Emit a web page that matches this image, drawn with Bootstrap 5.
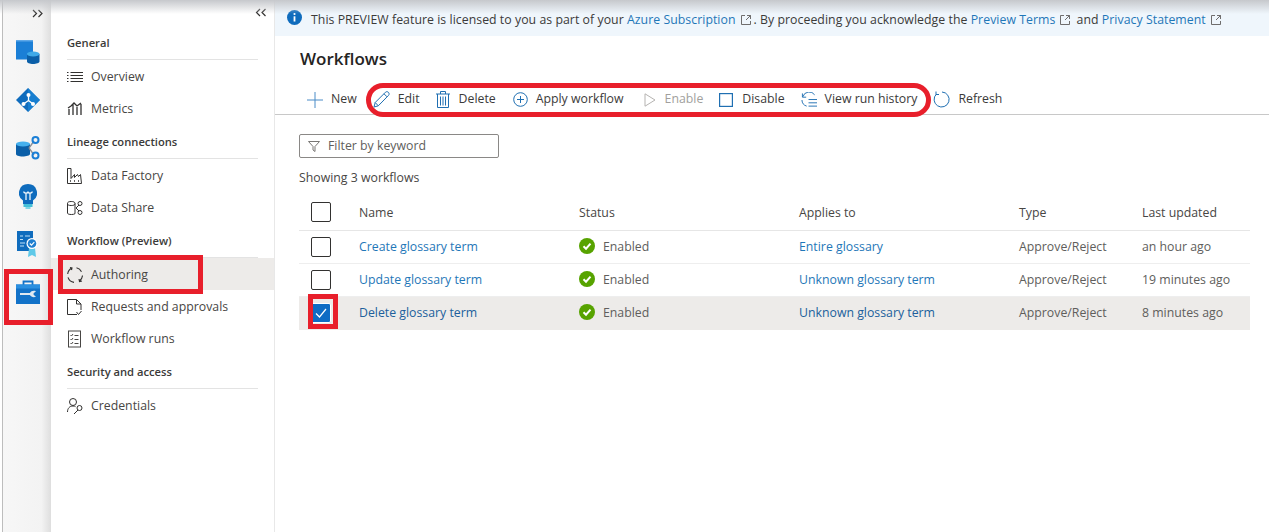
<!DOCTYPE html>
<html lang="en">
<head>
    <meta charset="UTF-8">
    <meta name="viewport" content="width=device-width, initial-scale=1.0">
    <title>Workflows</title>
    <link rel="stylesheet" href="https://cdn.jsdelivr.net/npm/bootstrap@5.3.0/dist/css/bootstrap.min.css">
    <style>
        html, body { height: 100%; }
        body {
            font-family: "Open Sans", "Noto Sans", sans-serif;
            font-size: 12.3px;
            color: #323130;
            background: #fff;
            overflow: hidden;
        }
        a { color: #1f77b8; text-decoration: none; }
        .app-shell { height: 532px; position: relative; }
        .top-shade {
            position: absolute; left: 0; right: 0; top: 0; height: 14px;
            background: linear-gradient(#c6c8cc, rgba(214,216,220,0));
            pointer-events: none; z-index: 3;
        }
        .icon-rail {
            width: 49px; flex: none; padding: 28px 0 0 3px;
            border-left: 1px solid #bdbdbd; margin-left: 2px;
            background: linear-gradient(90deg, #f7f7f7 0, #f3f3f3 80%, #dedede 100%);
            position: relative;
        }
        .rail-toggle { position: absolute; top: 9px; right: 7px; }
        .rail-slot { height: 48px; display: flex; justify-content: center; align-items: center; width: 43px; }
        .side-nav { width: 224px; flex: none; padding: 25px 0 0 0; position: relative; border-right: 1px solid #e8e8e8; }
        .nav-toggle { position: absolute; top: 8px; right: 7px; }
        .nav-head {
            height: 35px; margin: 0 16px 0 16px; padding-bottom: 7px; font-weight: 600; font-size: 11.2px;
            border-bottom: 1px solid #e3e3e3; display: flex; align-items: flex-end; color: #3b3a39;
        }
        .nav-row { height: 32px; display: flex; align-items: center; padding: 2px 0 0 16px; gap: 8px; color: #484644; position: relative; }
        .nav-row svg { width: 16px; height: 18px; flex: none; }
        .nav-row.is-active { background: #edebe9; }
        .mark-box { position: absolute; border: 5px solid #e81f2b; pointer-events: none; z-index: 2; }
        .mark-rail { left: 1px; top: 269px; width: 49px; height: 56px; }
        .mark-auth { left: 7px; right: 71px; top: -3px; bottom: -4px; }
        .mark-pill { left: -7px; right: -14px; top: 0; bottom: -3px; border-radius: 17px; }
        .mark-check { left: 9px; top: -3px; width: 30px; height: 35px; }
        .main-pane { min-width: 0; }
        .notice-bar { height: 36px; background: #eff6fc; padding: 5px 0 0 12px; gap: 9px; color: #3b3a39; flex: none; letter-spacing: .04px; }
        .notice-bar > svg { margin-bottom: 7px; flex: none; }
        .ext-icon { width: 10px; height: 10px; margin: 0 3px 0 5px; vertical-align: -1px; }
        .page-title { font-size: 17px; font-weight: 600; color: #252423; margin: 11px 0 0 25px; height: 36px; line-height: 24px; }
        .tool-bar { height: 32px; border-bottom: 1px solid #c8c8c8; padding-left: 32px; flex: none; }
        .tool-group { position: relative; display: flex; height: 100%; }
        .tool-btn { display: flex; align-items: center; gap: 8px; padding: 2px 16px 0 0; color: #3b3a39; white-space: nowrap; }
        .tool-btn.is-off { color: #a19f9d; }
        .tool-btn svg { flex: none; }
        .play-icon { margin-left: 4px; }
        .plus-icon { margin-left: 1px; }
        .filter-box {
            width: 200px; height: 24px; margin: 19px 0 0 24px; border: 1px solid #8a8886; border-radius: 2px;
            display: flex; align-items: center; gap: 8px; padding-left: 8px; color: #605e5c;
        }
        .count-line { margin: 11px 0 0 24px; height: 18px; line-height: 18px; color: #484644; }
        .flow-table { margin: 9px 19px 0 24px; width: 951px; table-layout: fixed; border-collapse: collapse; color: #605e5c; }
        .flow-table th { font-size: 12.3px; height: 34px; color: #484644; padding: 1px 0 0; vertical-align: middle; border-bottom: 1px solid #e6e6e6; font-weight: 500; }
        .flow-table td { height: 33px; padding: 2px 0 0; vertical-align: middle; border-bottom: 1px solid #eeeeee; color: #605e5c; background: transparent; }
        .flow-table tr.is-picked td { background: #edebe9; border-bottom-color: #edebe9; }
        .flow-table tr.is-picked a { color: #205f9c; }
        .check-cell { position: relative; }
        .tick-box { width: 20px; height: 20px; margin: -2px 0 0 12px; border: 1px solid #323130; border-radius: 2px; background: #fff; display: block; }
        .tick-box.is-on { background: #0f6cc4; border-color: #fff; display: flex; align-items: center; justify-content: center; }
        .status-ok { display: flex; align-items: center; gap: 8px; }
        .status-ok svg { margin-bottom: 3px; }
    </style>
</head>
<body>
<div class="app-shell d-flex">
    <div class="top-shade"></div>

    <aside class="icon-rail">
        <svg class="rail-toggle" width="12" height="9" viewBox="0 0 12 9" fill="none" stroke="#323130" stroke-width="1.2"><path d="M1 1l3.500 3.500L1 8M6.500 1L10 4.500 6.500 8"/></svg>
        <div class="rail-slot">
            <svg width="24" height="24" viewBox="0 0 24 24"><rect x="0" y="0" width="17" height="19.500" fill="#1b7fd6"/><rect x="0" y="0" width="17" height="1.500" fill="#5ea8e8"/><path d="M11 14v7.500c0 1.400 2.800 2.500 6 2.500s6.500-1.100 6.500-2.500V14z" fill="#0b5fa8"/><ellipse cx="17.200" cy="14" rx="6.300" ry="2.600" fill="#3fa9e8"/></svg>
        </div>
        <div class="rail-slot">
            <svg width="24" height="24" viewBox="0 0 24 24"><path d="M12 0l12 12-12 12L0 12z" fill="#0f6cbd"/><path d="M12 0l12 12-12 12z" fill="#1b86d8" opacity=".7"/><path d="M12.500 7v5.500M12.500 12.500L7.500 16M12.500 12.500l4.500 3.500" stroke="#fff" stroke-width="1.300" fill="none"/><circle cx="12.500" cy="7" r="2" fill="#fff"/><circle cx="7.500" cy="16" r="2" fill="#fff"/><circle cx="17" cy="16" r="2" fill="#fff"/></svg>
        </div>
        <div class="rail-slot">
            <svg width="24" height="24" viewBox="0 0 24 24" fill="none"><path d="M0 8v10c0 1.500 2.800 2.500 6.500 2.500S14 19.500 14 18V8z" fill="#0b5fa8"/><ellipse cx="7" cy="8" rx="7" ry="2.600" fill="#45b0ee"/><path d="M13 12l5-7M13 12l5 7" stroke="#8a8f96" stroke-width="1.300"/><circle cx="19.500" cy="4" r="3" stroke="#1b7fd6" stroke-width="2"/><circle cx="19.500" cy="19.500" r="3" stroke="#1b7fd6" stroke-width="2"/></svg>
        </div>
        <div class="rail-slot">
            <svg width="18" height="25" viewBox="0 0 18 25"><path d="M9 0a9 9 0 0 0-5 16.500V20h10v-3.500A9 9 0 0 0 9 0z" fill="#0f6cbd"/><rect x="4.500" y="20" width="9" height="3" fill="#45c0d8"/><rect x="6.500" y="23" width="5" height="2" fill="#7fd6e6"/><path d="M7 16V9.500M11 16V9.500M4.800 7.500c0 2.200 4.400 2.200 4.400 0M8.800 7.500c0 2.200 4.400 2.200 4.400 0" stroke="#fff" stroke-width="1.200" fill="none"/></svg>
        </div>
        <div class="rail-slot">
            <svg width="21" height="26" viewBox="0 0 21 26"><rect x="0" y="0" width="16" height="20" fill="#0f6cbd"/><path d="M3 5h3M3 8.500h3M3 12h5M3 15h4M8 5h5" stroke="#bfe0f8" stroke-width="1.200"/><path d="M12 17l-1 9 4-2 4 2-1-9z" fill="#5fc9e8"/><circle cx="15" cy="12.500" r="5.500" fill="#fff"/><circle cx="15" cy="12.500" r="4.300" fill="#1f7fd0"/><path d="M12.800 12.500l1.700 1.700 2.800-3" stroke="#fff" stroke-width="1.100" fill="none"/></svg>
        </div>
        <div class="rail-slot">
            <svg width="24" height="24" viewBox="0 0 24 24"><path d="M7.500 5V1.500h9V5" fill="none" stroke="#1272c8" stroke-width="1.800"/><rect x="0" y="4.500" width="24" height="19.500" fill="#1272c8"/><rect x="0" y="4.500" width="24" height="4" fill="#2a8fe0"/><path d="M4 13h10c1-2 3.500-2.700 6-1.800l-2.400 2v1.600l2.400 2c-2.500.9-5 .2-6-1.800H4z" fill="#dfe8f0"/></svg>
        </div>
        <div class="mark-box mark-rail"></div>
    </aside>

    <nav class="side-nav">
        <svg class="nav-toggle" width="12" height="9" viewBox="0 0 12 9" fill="none" stroke="#323130" stroke-width="1.200"><path d="M5 1L1.500 4.500 5 8M10.500 1L7 4.500 10.500 8"/></svg>
        <div class="nav-head">General</div>
        <div class="nav-row">
            <svg viewBox="0 0 16 18" fill="none" stroke="#323130"><path d="M3.500 4.500H16M3.500 7.500H16M3.500 10.500H16M3.500 13.500H16M0 4.500h1.500M0 7.500h1.500M0 10.500h1.500M0 13.500h1.500"/></svg>
            Overview
        </div>
        <div class="nav-row">
            <svg viewBox="0 0 16 18" fill="none" stroke="#323130" stroke-width="1.300"><path d="M2 9v6M6 4v11M10 7v8M14 4v11M1 8l3-2 3-3 3 3 4-3" /></svg>
            Metrics
        </div>
        <div class="nav-head">Lineage connections</div>
        <div class="nav-row">
            <svg viewBox="0 0 16 18" fill="none" stroke="#323130"><path d="M.5 16.500V1.500h3.500v10l3.500-4v3l3-3 1 2 2-2 1 9z"/><path d="M3 14h1M7 14h1M11 14h1" stroke-width="1.500"/></svg>
            Data Factory
        </div>
        <div class="nav-row">
            <svg viewBox="0 0 16 18" fill="none" stroke="#323130"><path d="M.5 4.500v9.500c0 1 1.500 1.500 4 1.500 1.500 0 2.500-.2 3.500-.8V4.500M.5 4.500C.5 3 2 2.500 4.200 2.500S8 3 8 4.500 6.500 6.500 4.200 6.500.5 6 .5 4.500z"/><circle cx="13" cy="4.500" r="2"/><circle cx="13" cy="13.500" r="2"/><path d="M9 9l3-3M9 9l3 3"/></svg>
            Data Share
        </div>
        <div class="nav-head">Workflow (Preview)</div>
        <div class="nav-row is-active">
            <svg viewBox="0 0 16 18" fill="none" stroke="#323130" stroke-width="1.100"><path d="M9.500 1.700a7.500 7.500 0 0 1 5 4M15.500 9.500a7.500 7.500 0 0 1-3 5.500M7 16.400a7.500 7.500 0 0 1-6-5M.7 8a7.500 7.500 0 0 1 4.300-6M3 1.500l2 .5-.5 2M12 13l.5 2.500 2.500-.5"/></svg>
            Authoring
            <div class="mark-box mark-auth"></div>
        </div>
        <div class="nav-row">
            <svg viewBox="0 0 16 18" fill="none" stroke="#323130"><path d="M10 16.500H.5V1.500h9L14 6v6M9.500 1.500V6H14M9.500 14l2 2.500 3-3.500"/></svg>
            Requests and approvals
        </div>
        <div class="nav-row">
            <svg viewBox="0 0 16 18" fill="none" stroke="#484644"><rect x="1.500" y="1" width="12" height="16"/><path d="M3.500 5l1 1 1.500-2M3.500 9l1 1 1.500-2M3.500 13l1 1 1.500-2M7.500 5.500h4M7.500 9.500h4M7.500 13.500h4"/></svg>
            Workflow runs
        </div>
        <div class="nav-head">Security and access</div>
        <div class="nav-row">
            <svg viewBox="0 0 16 18" fill="none" stroke="#323130"><circle cx="6" cy="5" r="3.500"/><path d="M.5 15c0-3.500 2-6 5.500-6 1 0 2 .2 2.500.6"/><circle cx="12.500" cy="11" r="2.500"/><path d="M11 13l-4 4"/></svg>
            Credentials
        </div>
    </nav>

    <main class="main-pane flex-grow-1 d-flex flex-column">
        <div class="notice-bar d-flex align-items-center">
            <svg width="15" height="15" viewBox="0 0 15 15"><circle cx="7.500" cy="7.500" r="7.500" fill="#0f6cbd"/><rect x="6.600" y="6.300" width="1.800" height="5.200" fill="#fff"/><circle cx="7.500" cy="4" r="1.100" fill="#fff"/></svg>
            <span>This PREVIEW feature is licensed to you as part of your <a href="#">Azure Subscription</a><svg class="ext-icon" viewBox="0 0 10 10" fill="none" stroke="#605e5c" stroke-width=".9"><path d="M4 .5H.5v9h9V6M5 5l4.500-4.500M6 .5h3.500V4"/></svg>. By proceeding you acknowledge the <a href="#">Preview Terms</a><svg class="ext-icon" viewBox="0 0 10 10" fill="none" stroke="#605e5c" stroke-width=".9"><path d="M4 .5H.5v9h9V6M5 5l4.500-4.500M6 .5h3.500V4"/></svg> and <a href="#">Privacy Statement</a><svg class="ext-icon" viewBox="0 0 10 10" fill="none" stroke="#605e5c" stroke-width=".9"><path d="M4 .5H.5v9h9V6M5 5l4.500-4.500M6 .5h3.500V4"/></svg></span>
        </div>

        <h1 class="page-title">Workflows</h1>

        <div class="tool-bar d-flex">
            <div class="tool-btn">
                <svg width="16" height="16" viewBox="0 0 16 16" stroke="#4a8cc7" fill="none"><path d="M8 0v16M0 8h16"/></svg>
                New
            </div>
            <div class="tool-group">
                <div class="mark-box mark-pill"></div>
                <div class="tool-btn">
                    <svg width="17" height="17" viewBox="0 0 17 17" fill="none" stroke="#1f6fb2"><path d="M1 16l1.200-4.500L12.500 1.200c.8-.8 2.300-.6 3 .2s.9 2.100 0 3L5.300 14.800zM2.200 11.500l3.100 3.300M11 2.800l3 3"/></svg>
                    Edit
                </div>
                <div class="tool-btn">
                    <svg width="15" height="17" viewBox="0 0 15 17" fill="none" stroke="#1f6fb2"><path d="M0 3h14M4.500 3V.5h5V3M1.500 3v13.500h11V3M4.500 5.500v9M7 5.500v9M9.500 5.500v9"/></svg>
                    Delete
                </div>
                <div class="tool-btn">
                    <svg class="plus-icon" width="15" height="15" viewBox="0 0 15 15" fill="none" stroke="#1f6fb2"><circle cx="7.500" cy="7.500" r="6.800"/><path d="M7.500 4v7M4 7.500h7"/></svg>
                    Apply workflow
                </div>
                <div class="tool-btn is-off">
                    <svg class="play-icon" width="13" height="14" viewBox="0 0 13 14" fill="none" stroke="#b5b3b1"><path d="M1 .8v12.400L11 7z"/></svg>
                    Enable
                </div>
                <div class="tool-btn">
                    <svg width="15" height="14" viewBox="0 0 15 14" fill="none" stroke="#1f6fb2" stroke-width="1.200"><rect x=".6" y=".6" width="12.800" height="12.800"/></svg>
                    Disable
                </div>
                <div class="tool-btn pe-0">
                    <svg width="16" height="16" viewBox="0 0 17 17" fill="none" stroke="#1f6fb2"><path d="M2 5a7 7 0 0 1 12.500-2M1.500 1.500V5.500h4M1 8.500a7 7 0 0 0 5 6.500M8 8h9M8 11.500h9M8 15h9"/></svg>
                    View run history
                </div>
            </div>
            <div class="tool-btn ms-3">
                <svg width="17" height="17" viewBox="0 0 17 17" fill="none" stroke="#1f6fb2"><path d="M3.500 3A7.500 7.500 0 1 0 9 1M3 .5V3.500H6"/></svg>
                Refresh
            </div>
        </div>

        <div class="filter-box">
            <svg width="12" height="11" viewBox="0 0 12 11" fill="none" stroke="#797775"><path d="M.5.500h11L7 5.500v5l-2-1.500V5.500z"/></svg>
            Filter by keyword
        </div>
        <div class="count-line">Showing 3 workflows</div>

        <table class="flow-table">
            <colgroup>
                <col style="width:60px"><col style="width:220px"><col style="width:220px"><col style="width:220px"><col style="width:123px"><col>
            </colgroup>
            <thead>
                <tr><th><span class="tick-box"></span></th><th>Name</th><th>Status</th><th>Applies to</th><th>Type</th><th>Last updated</th></tr>
            </thead>
            <tbody>
                <tr>
                    <td><span class="tick-box"></span></td>
                    <td><a href="#">Create glossary term</a></td>
                    <td><div class="status-ok"><svg width="16" height="16" viewBox="0 0 16 16"><circle cx="8" cy="8" r="8" fill="#57a300"/><path d="M4.500 8.300l2.500 2.400 4.500-5" stroke="#fff" stroke-width="2" fill="none"/></svg>Enabled</div></td>
                    <td><a href="#">Entire glossary</a></td>
                    <td>Approve/Reject</td>
                    <td>an hour ago</td>
                </tr>
                <tr>
                    <td><span class="tick-box"></span></td>
                    <td><a href="#">Update glossary term</a></td>
                    <td><div class="status-ok"><svg width="16" height="16" viewBox="0 0 16 16"><circle cx="8" cy="8" r="8" fill="#57a300"/><path d="M4.500 8.300l2.500 2.400 4.500-5" stroke="#fff" stroke-width="2" fill="none"/></svg>Enabled</div></td>
                    <td><a href="#">Unknown glossary term</a></td>
                    <td>Approve/Reject</td>
                    <td>19 minutes ago</td>
                </tr>
                <tr class="is-picked">
                    <td class="check-cell">
                        <span class="tick-box is-on"><svg width="12" height="10" viewBox="0 0 12 10" fill="none" stroke="#fff" stroke-width="1.200"><path d="M1 5.500l3.500 3.500L11 1"/></svg></span>
                        <div class="mark-box mark-check"></div>
                    </td>
                    <td><a href="#">Delete glossary term</a></td>
                    <td><div class="status-ok"><svg width="16" height="16" viewBox="0 0 16 16"><circle cx="8" cy="8" r="8" fill="#57a300"/><path d="M4.500 8.300l2.500 2.400 4.500-5" stroke="#fff" stroke-width="2" fill="none"/></svg>Enabled</div></td>
                    <td><a href="#">Unknown glossary term</a></td>
                    <td>Approve/Reject</td>
                    <td>8 minutes ago</td>
                </tr>
            </tbody>
        </table>
    </main>
</div>
<script src="https://cdn.jsdelivr.net/npm/bootstrap@5.3.0/dist/js/bootstrap.bundle.min.js"></script>
</body>
</html>
